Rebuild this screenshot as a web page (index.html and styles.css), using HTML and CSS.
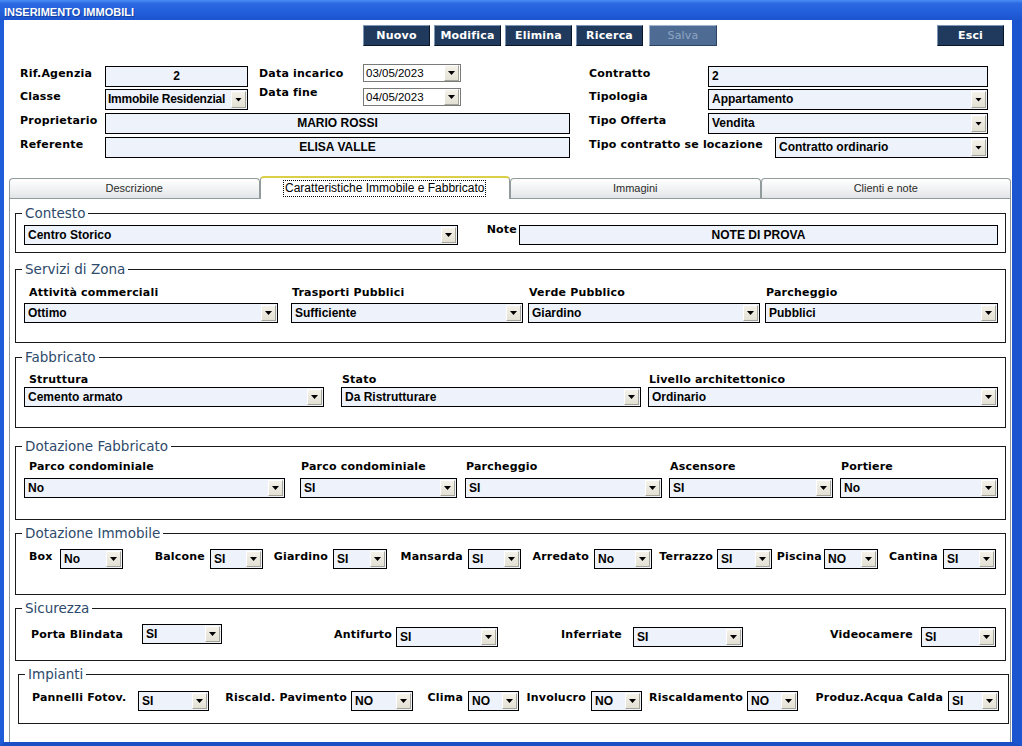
FILE: index.html
```html
<!DOCTYPE html>
<html lang="it">
<head>
<meta charset="utf-8">
<title>Inserimento Immobili</title>
<link rel="stylesheet" href="styles.css">
</head>
<body>
<div class="window">
  <div class="titlebar">INSERIMENTO IMMOBILI</div>
  <div class="client">
    <div class="toolbar">
      <button class="tb">Nuovo</button>
      <button class="tb">Modifica</button>
      <button class="tb">Elimina</button>
      <button class="tb">Ricerca</button>
      <button class="tb off">Salva</button>
      <button class="tb exit">Esci</button>
    </div>

    <div class="head">
      <span class="lbl c-a">Rif.Agenzia</span>
      <div class="field c-b center">2</div>
      <span class="lbl c-d">Data incarico</span>
      <div class="date c-e d1"><span class="v">03/05/2023</span><span class="dd"></span></div>
      <span class="lbl c-h">Contratto</span>
      <div class="field c-ij">2</div>

      <span class="lbl c-a">Classe</span>
      <div class="sel tall tight c-b"><span class="v">Immobile Residenzial</span><span class="dd"></span></div>
      <span class="lbl c-d up">Data fine</span>
      <div class="date c-e d2"><span class="v">04/05/2023</span><span class="dd"></span></div>
      <span class="lbl c-h">Tipologia</span>
      <div class="sel tall c-ij"><span class="v">Appartamento</span><span class="dd"></span></div>

      <span class="lbl c-a">Proprietario</span>
      <div class="field c-bf center">MARIO ROSSI</div>
      <span class="lbl c-h">Tipo Offerta</span>
      <div class="sel tall c-ij"><span class="v">Vendita</span><span class="dd"></span></div>

      <span class="lbl c-a">Referente</span>
      <div class="field c-bf center">ELISA VALLE</div>
      <span class="lbl c-hi">Tipo contratto se locazione</span>
      <div class="sel tall c-j"><span class="v">Contratto ordinario</span><span class="dd"></span></div>
    </div>

    <div class="tabs">
      <div class="tab">Descrizione</div>
      <div class="tab on"><span class="focus">Caratteristiche Immobile e Fabbricato</span></div>
      <div class="tab">Immagini</div>
      <div class="tab">Clienti e note</div>
    </div>

    <div class="panel">
      <fieldset class="grp g-contesto">
        <legend>Contesto</legend>
        <div class="r-contesto">
          <div class="sel"><span class="v">Centro Storico</span><span class="dd"></span></div>
          <span class="lbl note">Note</span>
          <div class="field short center">NOTE DI PROVA</div>
        </div>
      </fieldset>

      <fieldset class="grp g-zona">
        <legend>Servizi di Zona</legend>
        <div class="cols r-zona">
          <div class="col"><span class="lbl">Attività commerciali</span><div class="sel"><span class="v">Ottimo</span><span class="dd"></span></div></div>
          <div class="col"><span class="lbl">Trasporti Pubblici</span><div class="sel"><span class="v">Sufficiente</span><span class="dd"></span></div></div>
          <div class="col"><span class="lbl">Verde Pubblico</span><div class="sel"><span class="v">Giardino</span><span class="dd"></span></div></div>
          <div class="col"><span class="lbl">Parcheggio</span><div class="sel"><span class="v">Pubblici</span><span class="dd"></span></div></div>
        </div>
      </fieldset>

      <fieldset class="grp g-fabb">
        <legend>Fabbricato</legend>
        <div class="cols r-fabb">
          <div class="col"><span class="lbl">Struttura</span><div class="sel"><span class="v">Cemento armato</span><span class="dd"></span></div></div>
          <div class="col"><span class="lbl">Stato</span><div class="sel"><span class="v">Da Ristrutturare</span><span class="dd"></span></div></div>
          <div class="col"><span class="lbl">Livello architettonico</span><div class="sel"><span class="v">Ordinario</span><span class="dd"></span></div></div>
        </div>
      </fieldset>

      <fieldset class="grp g-dotfab">
        <legend>Dotazione Fabbricato</legend>
        <div class="cols r-dotfab">
          <div class="col"><span class="lbl">Parco condominiale</span><div class="sel"><span class="v">No</span><span class="dd"></span></div></div>
          <div class="col"><span class="lbl">Parco condominiale</span><div class="sel"><span class="v">SI</span><span class="dd"></span></div></div>
          <div class="col"><span class="lbl">Parcheggio</span><div class="sel"><span class="v">SI</span><span class="dd"></span></div></div>
          <div class="col"><span class="lbl">Ascensore</span><div class="sel"><span class="v">SI</span><span class="dd"></span></div></div>
          <div class="col"><span class="lbl">Portiere</span><div class="sel"><span class="v">No</span><span class="dd"></span></div></div>
        </div>
      </fieldset>

      <fieldset class="grp g-dotimm">
        <legend>Dotazione Immobile</legend>
        <div class="pairs r-imm">
          <span class="lbl">Box</span><div class="sel"><span class="v">No</span><span class="dd"></span></div>
          <span class="lbl">Balcone</span><div class="sel"><span class="v">SI</span><span class="dd"></span></div>
          <span class="lbl">Giardino</span><div class="sel"><span class="v">SI</span><span class="dd"></span></div>
          <span class="lbl">Mansarda</span><div class="sel"><span class="v">SI</span><span class="dd"></span></div>
          <span class="lbl">Arredato</span><div class="sel"><span class="v">No</span><span class="dd"></span></div>
          <span class="lbl pr4">Terrazzo</span><div class="sel"><span class="v">SI</span><span class="dd"></span></div>
          <span class="lbl pr2">Piscina</span><div class="sel"><span class="v">NO</span><span class="dd"></span></div>
          <span class="lbl">Cantina</span><div class="sel"><span class="v">SI</span><span class="dd"></span></div>
        </div>
      </fieldset>

      <fieldset class="grp g-sic">
        <legend>Sicurezza</legend>
        <div class="pairs r-sic">
          <span class="lbl">Porta Blindata</span><div class="sel lift"><span class="v">SI</span><span class="dd"></span></div>
          <span class="lbl pr4">Antifurto</span><div class="sel"><span class="v">SI</span><span class="dd"></span></div>
          <span class="lbl pr11">Inferriate</span><div class="sel"><span class="v">SI</span><span class="dd"></span></div>
          <span class="lbl pr8">Videocamere</span><div class="sel"><span class="v">SI</span><span class="dd"></span></div>
        </div>
      </fieldset>

      <fieldset class="grp g-imp">
        <legend>Impianti</legend>
        <div class="pairs r-imp">
          <span class="lbl">Pannelli Fotov.</span><div class="sel"><span class="v">SI</span><span class="dd"></span></div>
          <span class="lbl pr4">Riscald. Pavimento</span><div class="sel"><span class="v">NO</span><span class="dd"></span></div>
          <span class="lbl">Clima</span><div class="sel"><span class="v">NO</span><span class="dd"></span></div>
          <span class="lbl">Involucro</span><div class="sel"><span class="v">NO</span><span class="dd"></span></div>
          <span class="lbl pr4">Riscaldamento</span><div class="sel"><span class="v">NO</span><span class="dd"></span></div>
          <span class="lbl">Produz.Acqua Calda</span><div class="sel"><span class="v">SI</span><span class="dd"></span></div>
        </div>
      </fieldset>
    </div>
  </div>
</div>
</body>
</html>
```

FILE: styles.css
```css
html, body {
  margin: 0;
  padding: 0;
}
body {
  width: 1022px;
  height: 746px;
  overflow: hidden;
  background: #fff;
  font-family: "Liberation Sans", Arial, sans-serif;
}
.window {
  width: 1022px;
  height: 746px;
  display: flex;
  flex-direction: column;
}
.titlebar {
  height: 20px;
  box-sizing: border-box;
  padding: 5px 0 0 4px;
  font: bold 11px/15px "Liberation Sans", Arial, sans-serif;
  color: #fff;
  background: linear-gradient(#4a8df5 0%, #2b68e2 18%, #2360db 55%, #1d54cf 100%);
  text-shadow: 1px 1px 0 #123f9e;
}
.client {
  flex: 1;
  min-height: 0;
  display: flex;
  flex-direction: column;
  background: #fff;
  border-left: 4px solid #1f5cd7;
  border-right: 10px solid #1b55cf;
  border-bottom: 4px solid #1a4fc6;
}

/* toolbar */
.toolbar {
  display: flex;
  gap: 4px;
  margin-top: 5px;
  padding: 0 8px 0 359px;
}
.tb {
  width: 67px;
  height: 21px;
  box-sizing: border-box;
  padding: 0;
  background: #1f3a5d;
  color: #fff;
  font: bold 11px/19px "DejaVu Sans", Verdana, sans-serif;
  letter-spacing: .2px;
  border: 1px solid;
  border-color: #7c96b8 #0a1527 #0a1527 #7c96b8;
}
.tb.off {
  width: 68px;
  margin-left: 2px;
  background: #4e6c93;
  color: #8ea5c3;
  border-color: #a3b6cf #2c4363 #2c4363 #a3b6cf;
  font-weight: normal;
}
.tb.exit {
  margin-left: auto;
}

/* labels & inputs */
.lbl {
  padding-top: 1px;
  font: bold 11px/14px "DejaVu Sans", Verdana, sans-serif;
  letter-spacing: .2px;
  color: #000;
  white-space: nowrap;
}
.field {
  height: 21px;
  box-sizing: border-box;
  border: 1px solid #000;
  background: #eef3fb;
  padding: 0 3px;
  font: bold 12px/19px "Liberation Sans", Arial, sans-serif;
  color: #000;
  white-space: nowrap;
  overflow: hidden;
}
.field.short {
  height: 20px;
  line-height: 18px;
}
.center {
  text-align: center;
}
.sel {
  display: flex;
  height: 20px;
  box-sizing: border-box;
  border: 1px solid #000;
  background: #eef3fb;
}
.sel.tall {
  height: 21px;
}
.sel .v {
  flex: 1;
  min-width: 0;
  padding-left: 3px;
  font: bold 12px/18px "Liberation Sans", Arial, sans-serif;
  color: #000;
  white-space: nowrap;
  overflow: hidden;
}
.sel.tall .v {
  line-height: 19px;
}
.sel.tight .v {
  padding-left: 2px;
  letter-spacing: -.25px;
}
.dd {
  flex: none;
  width: 15px;
  margin: 1px;
  box-sizing: border-box;
  background: linear-gradient(#f4f2ea, #e3e0d4);
  border: 1px solid;
  border-color: #fff #a5a398 #a5a398 #fff;
  display: flex;
  align-items: center;
  justify-content: center;
}
.dd::after {
  content: "";
  width: 7px;
  height: 4px;
  background: #000;
  clip-path: polygon(0 0, 100% 0, 50% 100%);
}
.date {
  display: flex;
  height: 18px;
  box-sizing: border-box;
  border: 1px solid #7a7a7a;
  background: #fff;
}
.date .v {
  flex: 1;
  padding-left: 2px;
  font: 11.5px/16px "Liberation Sans", Arial, sans-serif;
  color: #000;
}
.date .dd {
  margin: 0 1px 0 0;
}

/* header grid */
.head {
  display: grid;
  margin: 20px 0 0 16px;
  grid-template-columns: 85px 143px 11px 104px 98px 109px 19px 119px 67px 213px;
  grid-template-rows: 23px 24px 24px 24px;
  align-items: start;
}
.c-a { grid-column: 1; }
.c-b { grid-column: 2; }
.c-bf { grid-column: 2 / 7; }
.c-d { grid-column: 4; }
.c-e { grid-column: 5; }
.c-h { grid-column: 8; }
.c-hi { grid-column: 8 / 10; }
.c-ij { grid-column: 9 / 11; }
.c-j { grid-column: 10; }
.up { margin-top: -4px; }
.d1 { margin-top: -2px; }
.d2 { margin-top: -1px; }

/* tabs */
.tabs {
  display: flex;
  align-items: flex-end;
  height: 22px;
  width: 1002px;
  margin: 15px 0 0 5px;
}
.tab {
  flex: 1;
  height: 20px;
  box-sizing: border-box;
  border: 1px solid #919b9c;
  border-bottom: none;
  border-radius: 4px 4px 0 0;
  background: linear-gradient(#fefefe, #f2f3f4 50%, #e2e5e8);
  font: 11px/19px "Liberation Sans", Arial, sans-serif;
  color: #2b2b2b;
  text-align: center;
}
.tab.on {
  position: relative;
  z-index: 1;
  height: 23px;
  margin-bottom: -1px;
  background: #fff;
  border-top: 2px solid #dccf48;
  font-size: 12px;
  line-height: 20px;
  color: #000;
}
.focus {
  display: inline-block;
  line-height: 15px;
  padding: 0 1px;
  outline: 1px dotted #000;
  vertical-align: middle;
}

/* panel */
.panel {
  flex: 1;
  min-height: 0;
  width: 1002px;
  margin-left: 5px;
  box-sizing: border-box;
  border: 1px solid #919b9c;
  border-bottom: none;
  padding-top: 6px;
  background: #fff;
}
.grp {
  margin: 0 0 0 5px;
  padding: 0;
  width: 991px;
  box-sizing: border-box;
  border: 1px solid #1b1b1b;
  min-inline-size: 0;
}
.grp legend {
  padding: 0 3px;
  margin-left: 6px;
  font: 13.5px/16px "DejaVu Sans", Verdana, sans-serif;
  color: #2d4a6b;
}
.g-contesto { height: 48px; }
.g-zona { margin-top: 8px; height: 82px; }
.g-fabb { margin-top: 6px; height: 79px; }
.g-dotfab { margin-top: 10px; height: 82px; }
.g-dotimm { margin-top: 5px; height: 70px; }
.g-sic { margin-top: 5px; height: 61px; }
.g-imp { margin-top: 5px; margin-left: 8px; height: 58px; }

.r-contesto {
  display: grid;
  grid-template-columns: 434px 61px 479px;
  margin: 4px 0 0 8px;
  align-items: start;
}
.note {
  text-align: right;
  padding-right: 2px;
  margin-top: -3px;
}

/* column groups */
.cols {
  display: grid;
  margin-left: 8px;
}
.col {
  display: flex;
  flex-direction: column;
}
.col .lbl {
  padding-left: 1px;
}
.col:first-child .lbl {
  padding-left: 5px;
}
.r-zona {
  grid-template-columns: 267px 237px 237px 233px;
  margin-top: 8px;
}
.r-zona .lbl { margin-bottom: 3px; }
.r-zona .col { padding-right: 5px; }
.r-zona .col:first-child { padding-right: 13px; }
.r-zona .col:last-child { padding-right: 0; }

.r-fabb {
  grid-template-columns: 317px 307px 350px;
  margin-top: 7px;
}
.r-fabb .lbl { margin-bottom: 0; }
.r-fabb .col { padding-right: 7px; }
.r-fabb .col:first-child { padding-right: 17px; }
.r-fabb .col:last-child { padding-right: 0; }

.r-dotfab {
  grid-template-columns: 276px 165px 204px 171px 158px;
  margin-top: 5px;
}
.r-dotfab .lbl { margin-bottom: 4px; }
.r-dotfab .col { padding-right: 7px; }
.r-dotfab .col:first-child { padding-right: 15px; }
.r-dotfab .col:nth-child(2) { padding-right: 8px; }
.r-dotfab .col:last-child { padding-right: 0; }

/* label + select pairs */
.pairs {
  display: grid;
  align-items: start;
}
.pairs .lbl {
  text-align: right;
  padding-right: 5px;
}
.pairs .lbl:first-child {
  text-align: left;
  padding-right: 0;
  padding-left: 13px;
}
.pairs .lbl.pr2 { padding-right: 2px; }
.pairs .lbl.pr4 { padding-right: 4px; }
.pairs .lbl.pr8 { padding-right: 8px; }
.pairs .lbl.pr11 { padding-right: 11px; }

.r-imm {
  grid-template-columns: 44px 63px 87px 53px 70px 54px 81px 53px 73px 58px 65px 55px 52px 54px 65px 53px;
  margin-top: 8px;
}
.r-sic {
  grid-template-columns: 126px 80px 174px 102px 135px 110px 178px 75px;
  margin-top: 11px;
}
.r-sic .lbl:first-child { padding-left: 15px; }
.r-sic .lift { margin-top: -3px; }
.r-imp {
  grid-template-columns: 119px 71px 142px 62px 55px 51px 72px 51px 105px 51px 150px 51px;
  margin-top: 8px;
}
.r-imp .sel { margin-top: 1px; }
```
